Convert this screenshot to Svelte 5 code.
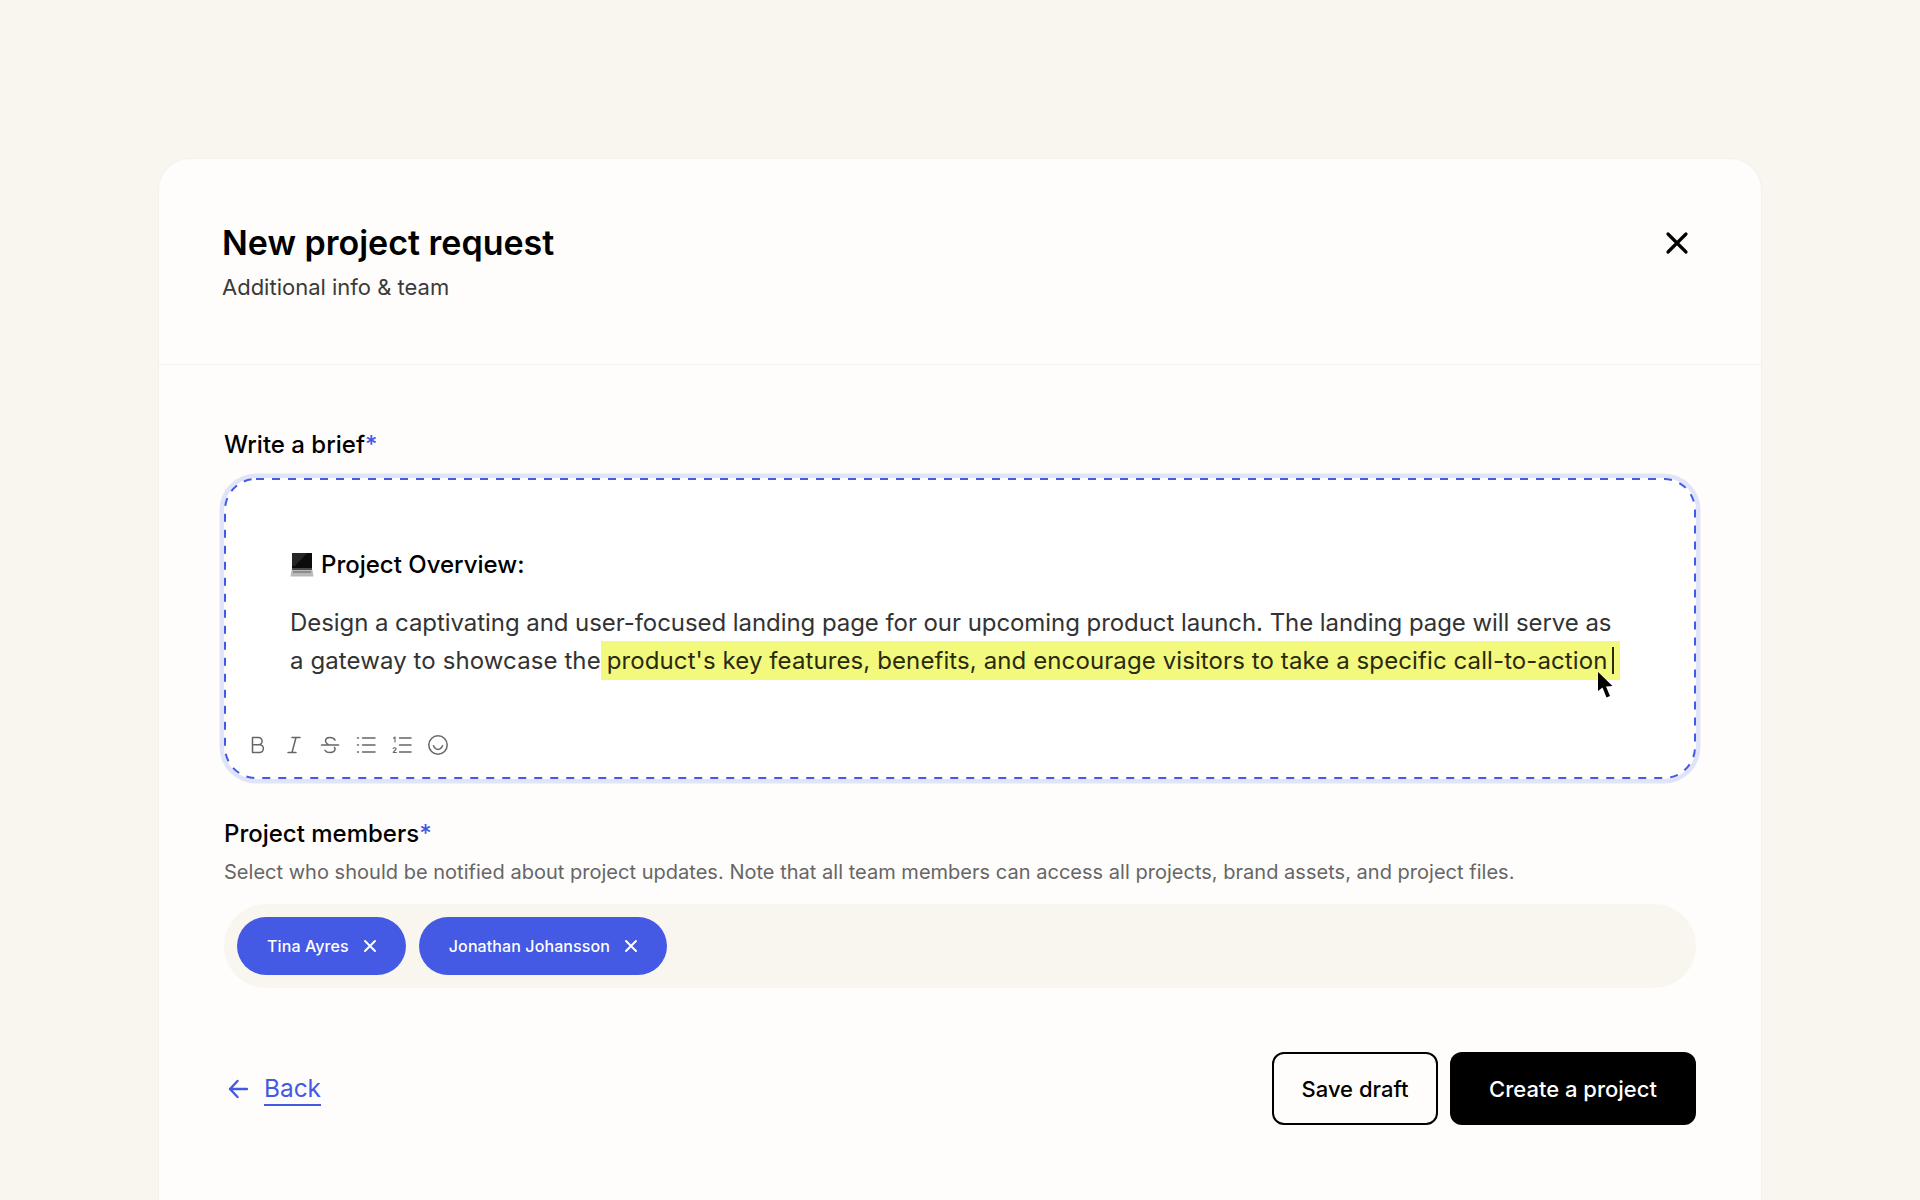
<script>
	const members = ["Tina Ayres", "Jonathan Johansson"];
</script>

<div class="page">
	<section class="card">
		<header class="head">
			<div>
				<h1>New project request</h1>
				<p class="sub">Additional info &amp; team</p>
			</div>
			<button class="close" aria-label="Close">
				<svg width="24" height="24" viewBox="0 0 24 24" fill="none" stroke="#000" stroke-width="3.200" stroke-linecap="round">
					<path d="M3 3 21 21M21 3 3 21" />
				</svg>
			</button>
		</header>

		<div class="body">
			<h2>Write a brief<span class="req">*</span></h2>
			<div class="editor">
				<svg class="dashes" width="1472" height="301" viewBox="0 0 1472 301" fill="none">
					<rect x="1" y="1" width="1470" height="299" rx="31" stroke="#4459e4" stroke-width="2" stroke-dasharray="8 8" />
				</svg>
				<div class="content">
					<h3>
						<svg class="laptop" width="24" height="24" viewBox="0 0 24 24">
							<path d="M2 0h20v15H2z" fill="#0c0c0c" />
							<path d="M2 0h15L5 13H2z" fill="#262626" />
							<path d="M2 15h20v2H2z" fill="#4a4a4a" />
							<path d="M1.500 17h21l1 6.500H.500z" fill="#b9b9b9" />
							<path d="M3 18h18v2H3z" fill="#8c8c8c" />
						</svg>
						Project Overview:
					</h3>
					<p>
						<span class="line first">Design a captivating and user-focused landing page for our upcoming product launch. The landing page will serve as</span>
						<span class="line second">a gateway to showcase the<mark>product's key features, benefits, and encourage visitors to take a specific call-to-action<i class="caret"></i></mark></span>
					</p>
					<svg class="pointer" width="18" height="28" viewBox="0 0 18 28">
						<path d="M1 1 1 20 5.500 16.500 9.500 26.500 13 25 9 15.500 15.500 15Z" fill="#000" />
					</svg>
				</div>
				<div class="tools">
					<svg width="20" height="20" viewBox="0 0 20 20"><path d="M4.500 2.500h6a3.600 3.600 0 0 1 0 7.200h-6zM4.500 9.700h7a3.900 3.900 0 0 1 0 7.800h-7z" /></svg>
					<svg width="20" height="20" viewBox="0 0 20 20"><path d="M8 2.500h8M4 17.500h8M12 2.500 8 17.500" /></svg>
					<svg width="20" height="20" viewBox="0 0 20 20"><path d="M15 5c-1-1.700-3-2.500-5-2.500-2.500 0-4.500 1.300-4.500 3.500 0 1.400 1 2.500 2.500 3.300M1.500 10h17M14.500 12.500c.3.500.5 1 .5 1.600 0 2-2.200 3.400-5 3.400-2.200 0-4-.7-5-2.200" /></svg>
					<svg width="20" height="20" viewBox="0 0 20 20"><path d="M6.500 3h12.500M6.500 10h12.500M6.500 17h12.500M1.500 3h1M1.500 10h1M1.500 17h1" /></svg>
					<svg width="20" height="20" viewBox="0 0 20 20"><path d="M7.500 3h11.500M7.500 10h11.500M7.500 17h11.500" /><path class="fine" d="M1.500 3.200 3 2v5M1.200 13.500c.5-1 3-1 3 .3 0 1-2 1.700-3 3.700h3.200" /></svg>
					<svg width="20" height="20" viewBox="0 0 20 20"><circle cx="10" cy="10" r="9.200" /><path d="M5.500 10.800c1 2.500 2.600 3.600 4.500 3.600s3.500-1.100 4.500-3.600" /></svg>
				</div>
			</div>

			<h2 class="members-title">Project members<span class="req">*</span></h2>
			<p class="hint">Select who should be notified about project updates. Note that all team members can access all projects, brand assets, and project files.</p>
			<div class="picker">
				{#each members as name}
					<span class="chip">
						{name}
						<svg width="14" height="14" viewBox="0 0 14 14" fill="none" stroke="#fff" stroke-width="2" stroke-linecap="round">
							<path d="M2 2 12 12M12 2 2 12" />
						</svg>
					</span>
				{/each}
			</div>

			<footer class="actions">
				<a class="back" href="#back">
					<svg width="20" height="20" viewBox="0 0 20 20" fill="none" stroke="#4459e4" stroke-width="2.400" stroke-linecap="round" stroke-linejoin="round">
						<path d="M19 10H2M9.500 2 2 10l7.500 8" />
					</svg>
					<span>Back</span>
				</a>
				<div class="buttons">
					<button class="btn ghost">Save draft</button>
					<button class="btn solid">Create a project</button>
				</div>
			</footer>
		</div>
	</section>
</div>

<style>
	:global(body) {
		background: #f8f6ef;
		font-family: Inter, "Liberation Sans", sans-serif;
		color: #000;
	}

	.page {
		height: 1200px;
		padding: 158px 158px 0 158px;
		box-sizing: border-box;
		overflow: hidden;
	}

	.card {
		height: 1100px;
		background: #fefdfb;
		border: 1px solid #f3f1ea;
		border-radius: 32px;
	}

	.head {
		display: flex;
		justify-content: space-between;
		align-items: flex-start;
		height: 206px;
		box-sizing: border-box;
		padding: 62px 72px 0 63px;
		border-bottom: 1px solid #f3f1ea;
	}

	h1 {
		margin: 0;
		font-size: 34px;
		line-height: 44px;
		font-weight: 600;
	}

	.sub {
		margin: 7px 0 0;
		font-size: 22px;
		line-height: 30px;
		color: #3a3a3a;
	}

	.close {
		padding: 0;
		margin-top: 10px;
		border: 0;
		background: none;
	}

	.body {
		padding: 64px 65px 0;
	}

	h2 {
		margin: 0;
		font-size: 24px;
		line-height: 32px;
		font-weight: 500;
	}

	.req {
		color: #4459e4;
	}

	.editor {
		position: relative;
		margin-top: 17px;
		height: 301px;
		box-sizing: border-box;
		border-radius: 32px;
		box-shadow: 0 0 0 4.500px #e0e4f8;
		background: #fff;
		display: flex;
		flex-direction: column;
	}

	.dashes {
		position: absolute;
		left: 0;
		top: 0;
		pointer-events: none;
	}

	.content {
		position: relative;
		flex: 1;
		padding: 68px 66px 0;
		font-size: 24px;
		line-height: 38px;
	}

	h3 {
		margin: 0;
		display: flex;
		align-items: center;
		gap: 7px;
		font-size: 24px;
		line-height: 38px;
		font-weight: 500;
	}

	.content p {
		margin: 20px 0 0;
		color: #333;
	}

	.line {
		display: block;
		white-space: nowrap;
	}

	.first {
		letter-spacing: -0.065px;
	}

	.second {
		letter-spacing: 0.1px;
	}

	mark {
		background: #f2f97d;
		color: #2a2a10;
		padding: 5px 6px 5px 6px;
	}

	.caret {
		display: inline-block;
		width: 2px;
		height: 27px;
		margin-left: 4px;
		background: #2a2a10;
		vertical-align: -5px;
	}

	.pointer {
		position: absolute;
		left: 1373px;
		top: 193px;
	}

	.tools {
		display: flex;
		align-items: center;
		gap: 16px;
		padding: 0 0 24px 24px;
	}

	.tools svg {
		fill: none;
		stroke: #666;
		stroke-width: 1.500;
		stroke-linecap: round;
		stroke-linejoin: round;
	}

	.tools .fine {
		stroke-width: 1.100;
	}

	.members-title {
		margin-top: 39px;
	}

	.hint {
		margin: 7px 0 0;
		font-size: 20px;
		line-height: 30px;
		letter-spacing: 0.02px;
		color: #666;
	}

	.picker {
		display: flex;
		gap: 13px;
		height: 84px;
		box-sizing: border-box;
		margin-top: 17px;
		padding: 13px;
		background: #f8f6ef;
		border-radius: 42px;
	}

	.chip {
		display: flex;
		align-items: center;
		gap: 14px;
		height: 58px;
		padding: 0 29px 0 30px;
		border-radius: 29px;
		background: #4459e4;
		color: #fff;
		font-size: 16px;
		font-weight: 500;
		letter-spacing: 0.1px;
	}

	.actions {
		display: flex;
		justify-content: space-between;
		align-items: center;
		margin-top: 64px;
	}

	.back {
		display: flex;
		align-items: center;
		gap: 16px;
		padding-left: 4px;
		color: #4459e4;
		font-size: 24.400px;
		text-decoration: none;
	}

	.back span {
		border-bottom: 2px solid #4459e4;
		line-height: 31px;
		padding-top: 1px;
	}

	.buttons {
		display: flex;
		gap: 12px;
	}

	.btn {
		height: 73px;
		border-radius: 12px;
		font-family: inherit;
		font-size: 22px;
		font-weight: 450;
		box-sizing: border-box;
	}

	.ghost {
		width: 166px;
		background: transparent;
		border: 2px solid #000;
		color: #000;
	}

	.solid {
		width: 246px;
		background: #000;
		border: 0;
		color: #fff;
	}
</style>
